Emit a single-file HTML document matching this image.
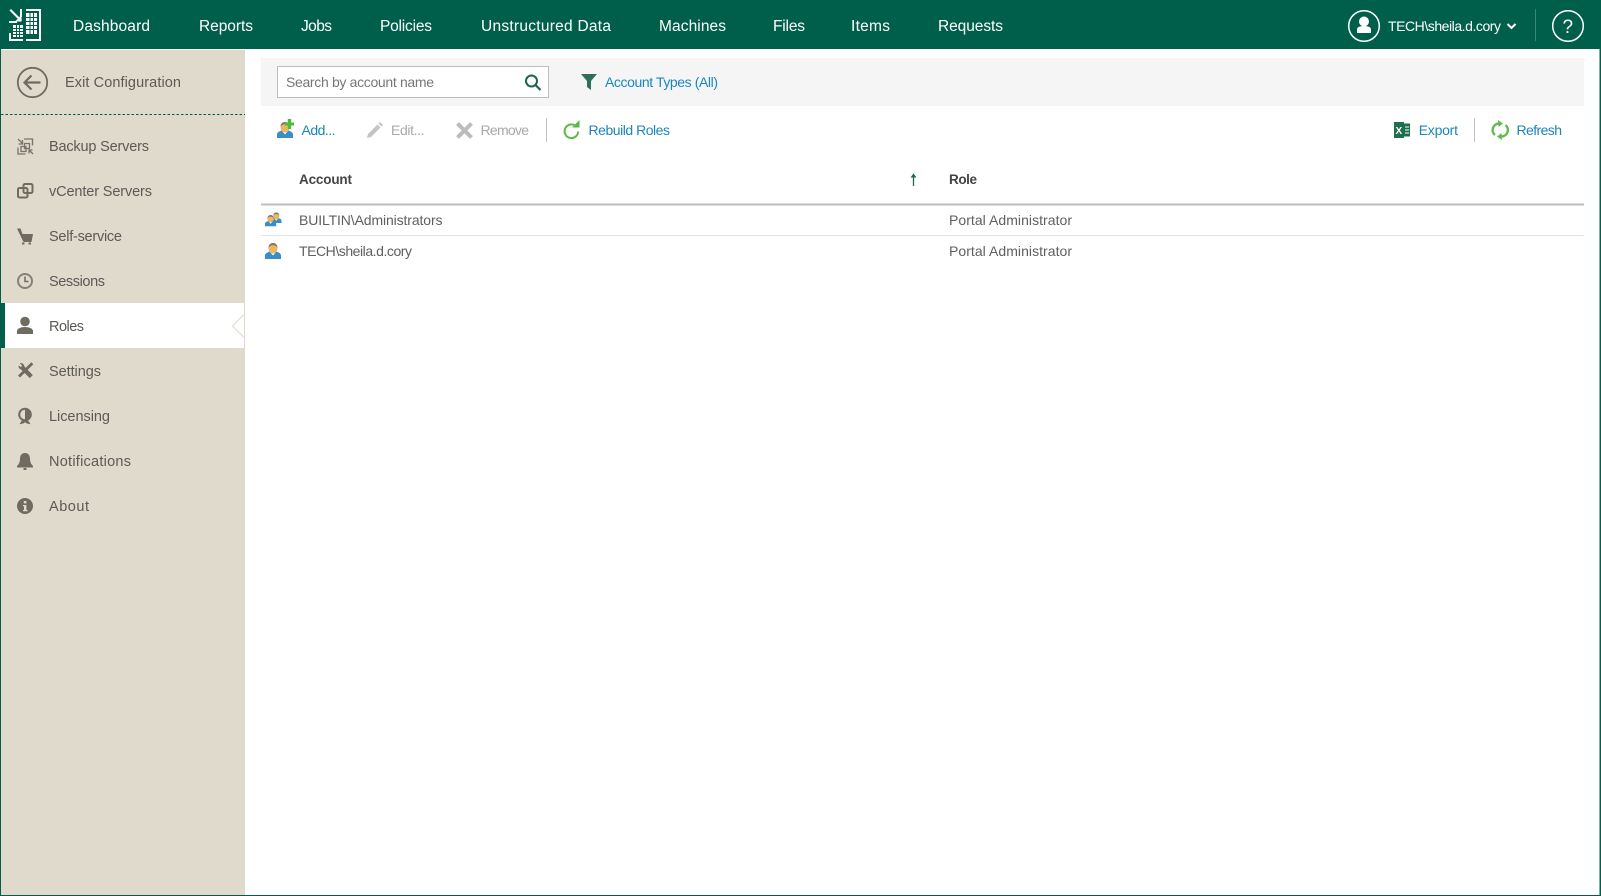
<!DOCTYPE html>
<html><head><meta charset="utf-8"><title>Roles</title>
<style>
html,body{margin:0;padding:0;background:#fff;overflow:hidden;width:1601px;height:896px}
svg{display:block}
text{font-family:"Liberation Sans",sans-serif;font-size:14.5px;fill:#5c5a56}
.n{fill:#fff;font-size:15.5px}
.l{fill:#1b86ba}
.d{fill:#a9a9a9}
.c{fill:#5f5f5f;font-size:14px}
.h{fill:#444;font-weight:bold;font-size:13.5px}
</style></head><body>
<svg width="1601" height="896" viewBox="0 0 1601 896" xmlns="http://www.w3.org/2000/svg">
<rect width="1601" height="896" fill="#fff"/>
<rect width="1601" height="49" fill="#005f4b"/>
<rect x="1" y="50" width="244" height="845" fill="#e0dacd"/>
<rect x="0" y="49" width="1" height="847" fill="#005f4b"/>
<rect x="1599.5" y="49" width="1.5" height="847" fill="#005f4b"/>
<rect x="0" y="895" width="1601" height="1" fill="#005f4b"/>

<!-- logo -->
<g fill="#fff">
<path d="M9 21h8v2h-8zM20 9h2v8h-2zM9 33h2v6h12v2h-14zM26 9h15v32h-15v-2h13v-28h-13z"/>
<rect x="26" y="13" width="11" height="21"/>
<rect x="13" y="25" width="10" height="12"/>
<path d="M9.500 10.500l1.500-1.500 11 11-1.500 1.500z"/>
<path d="M15 21.500h6.500v-6.500z"/>
</g>
<g stroke="#005f4b" stroke-width="1">
<path d="M26 17.500h11M26 21.500h11M26 25.500h11M26 29.500h11M30 13v21M33.500 13v21"/>
<path d="M13 28.500h10M13 31.500h10M13 34.500h10M16.500 25v12M19.500 25v12"/>
</g>

<!-- nav -->
<text class="n" x="73" y="31" textLength="77">Dashboard</text>
<text class="n" x="199" y="31" textLength="54">Reports</text>
<text class="n" x="301" y="31" textLength="31">Jobs</text>
<text class="n" x="380" y="31" textLength="52">Policies</text>
<text class="n" x="481" y="31" textLength="130">Unstructured Data</text>
<text class="n" x="659" y="31" textLength="67">Machines</text>
<text class="n" x="773" y="31" textLength="32">Files</text>
<text class="n" x="851" y="31" textLength="39">Items</text>
<text class="n" x="938" y="31" textLength="65">Requests</text>

<!-- user -->
<circle cx="1364" cy="26" r="15.300" fill="none" stroke="#fff" stroke-width="1.500"/>
<circle cx="1364" cy="21.500" r="5" fill="#fff"/>
<path d="M1357 33v-3.500c0-2.500 3-3.500 7-3.500s7 1 7 3.500v3.500z" fill="#fff"/>
<text x="1388" y="31" textLength="113" style="fill:#fff;font-size:14px">TECH\sheila.d.cory</text>
<path d="M1507.500 24l4 4 4-4" fill="none" stroke="#fff" stroke-width="2"/>
<rect x="1535" y="9" width="1" height="32" fill="#3f8676"/>
<circle cx="1568" cy="26" r="15.300" fill="none" stroke="#fff" stroke-width="1.500"/>
<text x="1562.500" y="33" style="fill:#fff;font-size:19px">?</text>

<!-- sidebar -->
<circle cx="32.500" cy="82.500" r="14.700" fill="none" stroke="#6f6b61" stroke-width="1.800"/>
<path d="M40.500 82.500h-15M31.500 75.500l-7 7 7 7" fill="none" stroke="#6f6b61" stroke-width="2.200"/>
<text x="65" y="87" textLength="116">Exit Configuration</text>
<path d="M1 114.500H245" stroke="#005f4b" stroke-dasharray="2.500 2" stroke-width="1"/>

<rect x="1" y="303" width="243" height="45" fill="#fff"/>
<rect x="0" y="303" width="5" height="45" fill="#005f4b"/>
<path d="M244 314.500L232.500 326 244 337.500" fill="#fff" stroke="#e0dacd" stroke-width="1"/>

<text x="49" y="151" textLength="100">Backup Servers</text>
<text x="49" y="196" textLength="103">vCenter Servers</text>
<text x="49" y="241" textLength="73">Self-service</text>
<text x="49" y="286" textLength="56">Sessions</text>
<text x="49" y="331" textLength="35">Roles</text>
<text x="49" y="376" textLength="52">Settings</text>
<text x="49" y="421" textLength="61">Licensing</text>
<text x="49" y="466" textLength="82">Notifications</text>
<text x="49" y="511" textLength="40">About</text>

<!-- icons -->
<g fill="none" stroke="#77736a" stroke-width="1.300">
<path d="M24 139h8.500v6.500M18 147.500v6.500h7.500"/>
<path d="M24.500 143.500h5v5h-5z M21 146.500h5v5h-5z"/>
<path d="M18 139l4.500 4.500M22.500 140v4h-4M33 154l-4-4M29 153.500v-3.500h3.500"/>
</g>
<g fill="none" stroke="#6f6b61" stroke-width="2">
<rect x="18" y="188" width="9.500" height="9.500" rx="1.500"/>
<rect x="23.500" y="184" width="9" height="9" rx="1.500"/>
</g>
<path d="M17 228.500h3.500l2 5.500h10.500l-1.500 8h-8z" fill="#6f6b61"/>
<rect x="22" y="242.500" width="2.500" height="2" fill="#6f6b61"/>
<rect x="28.500" y="242.500" width="2.500" height="2" fill="#6f6b61"/>
<circle cx="25" cy="281" r="7" fill="none" stroke="#858178" stroke-width="2"/>
<path d="M25 276.500v5h3.500" fill="none" stroke="#6f6b61" stroke-width="1.500"/>
<circle cx="25" cy="321.500" r="4.800" fill="#6f6b61"/>
<path d="M17 334v-3c0-2.500 4-4 8-4s8 1.500 8 4v3z" fill="#6f6b61"/>
<!-- settings: wrench + screwdriver -->
<path d="M18.500 365.500a4 4 0 0 0 2.800 4.300l8.500 8.300 3-3-8.300-8.500a4 4 0 0 0-4.800-3.500l2.500 2.700-1.200 1.200z" fill="#6f6b61"/>
<path d="M18 375.500l8.800-8.800 2-2 2.500-2.500 2 2-2.500 2.500-2 2-8.800 8.800z" fill="#6f6b61"/>
<circle cx="25" cy="414.500" r="5.800" fill="none" stroke="#6f6b61" stroke-width="2"/>
<path d="M25 409v11a5.500 5.500 0 0 0 0-11z" fill="#6f6b61"/>
<path d="M20.500 423.500l2-3h5l2 3-2.500-.5-2-1.500-2 1.500z" fill="#6f6b61" stroke="#6f6b61"/>
<path d="M25 453c3.500 0 5 2.500 5 6 0 3 1 5 3 7v1.500H17V466c2-2 3-4 3-7 0-3.500 1.500-6 5-6z" fill="#6f6b61"/>
<rect x="23.500" y="468" width="3" height="2" fill="#6f6b61"/>
<circle cx="25" cy="506" r="8" fill="#6f6b61"/>
<rect x="23.800" y="501" width="2.600" height="2.400" fill="#e0dacd"/>
<path d="M23 505h3.400v5h1.100v1.300h-4.500V510h1v-3.700h-1z" fill="#e0dacd"/>

<!-- toolbar -->
<rect x="261" y="58" width="1323" height="48" fill="#f5f5f5"/>
<rect x="277.500" y="66.500" width="271" height="31" fill="#fff" stroke="#bdbdbd"/>
<text x="286" y="87" textLength="148" style="font-size:14px;fill:#777">Search by account name</text>
<circle cx="531.500" cy="81" r="5.500" fill="none" stroke="#1f6351" stroke-width="2"/>
<path d="M535.500 85l5 5" stroke="#1f6351" stroke-width="2.200"/>
<path d="M581 74h16l-6 7v9l-4-3v-6z" fill="#2c7059"/>
<text class="l" x="605" y="87" textLength="113" style="font-size:14px">Account Types (All)</text>

<!-- action bar -->
<defs>
<g id="p">
<path d="M0 16v-3.500c0-2 2-3 4.500-4l3.500 3.500 3.500-3.500c2.500 1 4.500 2 4.500 4V16z" fill="#3a8ec4"/>
<path d="M5.500 9.500l2.500 3 2.500-3z" fill="#fff"/>
<ellipse cx="8" cy="5.500" rx="4.500" ry="5" fill="#ecb75f"/>
<path d="M3.500 5c0-3.500 2-5 4.500-5s4.500 1.500 4.500 5c-1-2-2.500-2.700-4.500-2.700S4.500 3 3.500 5z" fill="#7f786a"/>
</g>
</defs>
<use href="#p" x="277" y="122"/>
<path d="M286 125.500h2.800v-3.500h3.400v3.500h2.800v3h-2.800v3.500h-3.400v-3.500h-2.800z" fill="#4dbb3c" transform="translate(-1 -3)"/>
<text class="l" x="301.500" y="135" textLength="34" style="font-size:14px">Add...</text>
<path d="M367 138l1-4 9.500-9.500 3 3L371 137z" fill="#c4c4c4"/>
<path d="M378.500 123.500l1.500-1.500 3 3-1.500 1.500z" fill="#c4c4c4"/>
<text class="d" x="391" y="135" textLength="33.500" style="font-size:14px">Edit...</text>
<path d="M457.500 123.500l14 14M471.500 123.500l-14 14" stroke="#bcbcbc" stroke-width="4"/>
<text class="d" x="480.500" y="135" textLength="48.500" style="font-size:14px">Remove</text>
<rect x="546" y="118" width="1" height="24" fill="#c4c4c4"/>
<path d="M574.500 125.200a6.800 6.800 0 1 0 3.700 6.300" fill="none" stroke="#5ab946" stroke-width="2"/>
<path d="M572 127.500h7.500v-7.500z" fill="#5ab946"/>
<text class="l" x="588.500" y="135" textLength="81.500" style="font-size:14px">Rebuild Roles</text>

<rect x="1394" y="122" width="10" height="16" fill="#1f6f4f"/>
<rect x="1404" y="123.500" width="6" height="13" fill="#1f6f4f"/>
<path d="M1405 127h4M1405 130h4M1405 133h4" stroke="#fff" stroke-width="1"/>
<text x="1395.500" y="134" style="fill:#fff;font-size:10px;font-weight:bold">X</text>
<text class="l" x="1418.700" y="135" textLength="39.300" style="font-size:14px">Export</text>
<rect x="1474" y="118" width="1" height="24" fill="#c4c4c4"/>
<g fill="none" stroke="#62bb52" stroke-width="2.400">
<path d="M1495 135a6.500 6.500 0 0 1 4-11.500"/>
<path d="M1505.500 125a6.500 6.500 0 0 1-4 11.500"/>
</g>
<path d="M1498 120l5 3.500-4.500 3.500zM1502 140l-5-3.500 4.500-3.500z" fill="#62bb52"/>
<text class="l" x="1516.500" y="135" textLength="45.500" style="font-size:14px">Refresh</text>

<!-- table -->
<text class="h" x="299" y="184" textLength="53">Account</text>
<path d="M913.500 186v-11" stroke="#1f6351" stroke-width="1.300"/>
<path d="M910.500 177.500l3-4 3 4z" fill="#1f6351"/>
<text class="h" x="949" y="184" textLength="28">Role</text>
<rect x="261" y="203.500" width="1323" height="2" fill="#bdbdbd"/>

<g transform="translate(271 212.500) scale(.66)"><use href="#p" x="0" y="0"/></g>
<g transform="translate(265 215) scale(.7)"><use href="#p" x="0" y="0"/></g>
<text class="c" x="299" y="225" textLength="143.500">BUILTIN\Administrators</text>
<text class="c" x="949" y="225" textLength="123">Portal Administrator</text>
<rect x="261" y="235" width="1323" height="1" fill="#e2e2e2"/>
<use href="#p" x="265" y="243"/>
<text class="c" x="299" y="256" textLength="113">TECH\sheila.d.cory</text>
<text class="c" x="949" y="256" textLength="123">Portal Administrator</text>
</svg>
</body></html>
